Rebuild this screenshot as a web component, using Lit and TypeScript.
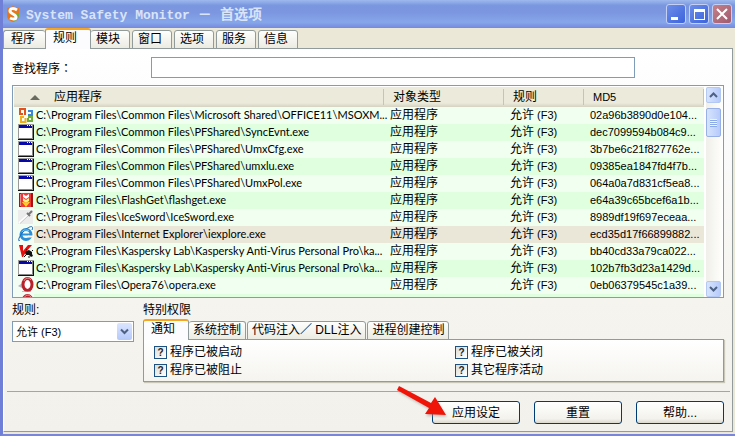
import { LitElement, html, css, svg } from "lit";
import { customElement, property, state } from "lit/decorators.js";
import { classMap } from "lit/directives/class-map.js";

type IconName = "office" | "window" | "flashget" | "sword" | "ie" | "kav" | "opera";

interface Rule {
  icon: IconName;
  path: string;
  md5: string;
}

const RULES: Rule[] = [
  { icon: "office", path: "C:\\Program Files\\Common Files\\Microsoft Shared\\OFFICE11\\MSOXM...", md5: "02a96b3890d0e104..." },
  { icon: "window", path: "C:\\Program Files\\Common Files\\PFShared\\SyncEvnt.exe", md5: "dec7099594b084c9..." },
  { icon: "window", path: "C:\\Program Files\\Common Files\\PFShared\\UmxCfg.exe", md5: "3b7be6c21f827762e..." },
  { icon: "window", path: "C:\\Program Files\\Common Files\\PFShared\\umxlu.exe", md5: "09385ea1847fd4f7b..." },
  { icon: "window", path: "C:\\Program Files\\Common Files\\PFShared\\UmxPol.exe", md5: "064a0a7d831cf5ea8..." },
  { icon: "flashget", path: "C:\\Program Files\\FlashGet\\flashget.exe", md5: "e64a39c65bcef6a1b..." },
  { icon: "sword", path: "C:\\Program Files\\IceSword\\IceSword.exe", md5: "8989df19f697eceaa..." },
  { icon: "ie", path: "C:\\Program Files\\Internet Explorer\\iexplore.exe", md5: "ecd35d17f66899882..." },
  { icon: "kav", path: "C:\\Program Files\\Kaspersky Lab\\Kaspersky Anti-Virus Personal Pro\\ka...", md5: "bb40cd33a79ca022..." },
  { icon: "window", path: "C:\\Program Files\\Kaspersky Lab\\Kaspersky Anti-Virus Personal Pro\\ka...", md5: "102b7fb3d23a1429d..." },
  { icon: "opera", path: "C:\\Program Files\\Opera76\\opera.exe", md5: "0eb06379545c1a39..." },
];

const ICONS = {
  office: svg`
    <g fill="none" stroke-width="2">
      <path d="M5 7H2V2H7V7H6" stroke="#e2521f"/>
      <path d="M10 4H14V8H10" stroke="#3b86d8"/>
      <path d="M6 10H3V15H7.500V11" stroke="#f0b01c"/>
      <path d="M10 10H14V14H10V11" stroke="#6fae38"/>
    </g>`,
  window: svg`
    <path d="M0 0h16v16H0z" fill="#9a9a9a"/>
    <path d="M1 4h13v10H1z" fill="#fff"/>
    <path d="M1 1h13v3H1z" fill="#0808a8"/>
    <path d="M9 1h1v1H9zM11 1h1v1h-1zM13 1h1v1h-1z" fill="#fff"/>
    <path d="M15 1h1v15H0v-1h15z" fill="#111"/>
    <path d="M1 14h13v1H1zM14 1h1v13h-1z" fill="#888"/>`,
  flashget: svg`
    <path d="M1 1h14v14H1z" fill="#a31414"/>
    <path d="M3 1h10v14H3z" fill="#f03838"/>
    <path d="M2 2h1v12H2z" fill="#e88"/>
    <path d="M5 2l3 2 3-2v3L8 7 5 5z" fill="#fff"/>
    <path d="M5 6l3 2 3-2v3l-3 2-3-2z" fill="#fff080"/>
    <path d="M4 10h2l2 1 2-1h2l-4 5z" fill="#ffd020"/>`,
  sword: svg`
    <path d="M0 1h15v14H0z" fill="#ececec"/>
    <path d="M1 14L10 6" stroke="#fff" stroke-width="2"/>
    <path d="M2 14.500L11 6" stroke="#c4c4c4"/>
    <path d="M9 4l3 3M11 5l3-3" stroke="#777" stroke-width="2"/>`,
  ie: svg`
    <circle cx="8" cy="8.500" r="5" fill="none" stroke="#2d8fd8" stroke-width="3"/>
    <path d="M4 8.500h10" stroke="#2d8fd8" stroke-width="2"/>
    <path d="M10 10.500h5" stroke="#fbf3e6" stroke-width="2"/>
    <path d="M2 14C-1 17 1 9 7 4S16 0 14 4" fill="none" stroke="#1b67b4"/>
    <path d="M4 6C5 4 8 3 11 5" fill="none" stroke="#8fd0f6"/>`,
  kav: svg`
    <path d="M1 2h4v6l5-6h4L8 9l-3 5H4z" fill="#e31010"/>
    <path d="M8 8l3-1 3 2v2l1 2-2 1-2-2-3 0-1-2z" fill="#111"/>
    <path d="M9 7l-1-1M14 8l1-1M8 12l-2 2M11 13v2" stroke="#111"/>`,
  opera: svg`
    <path d="M0 9l6-4v7z" fill="#b4b4bc"/>
    <ellipse cx="9.500" cy="7.500" rx="4.500" ry="6" fill="#fff" stroke="#b8202a" stroke-width="3"/>
    <path d="M6 4c1-3 5-4 7-1" fill="none" stroke="#ee9090"/>
    <path d="M4 14.500h9" stroke="#999" opacity=".6"/>`,
};

/** A row of tabs; the selected one rises above its neighbours. */
@customElement("tab-strip")
export class TabStrip extends LitElement {
  @property({ attribute: false }) tabs: string[] = [];
  @property({ type: Number }) selected = 0;
  @property({ type: Boolean, reflect: true }) compact = false;

  static styles = css`
    :host { display: flex; align-items: flex-end; height: 21px; }
    .tab {
      box-sizing: border-box;
      height: 19px;
      margin: 0 2px 0 0;
      padding: 0 9px 0 5px;
      border: 1px solid #919b9c;
      border-radius: 3px 3px 0 0;
      background: linear-gradient(#fefefd, #ecebe2);
      color: #000;
      font: inherit;
      line-height: 17px;
      white-space: nowrap;
    }
    :host([compact]) .tab { margin-right: 1px; padding: 0 4px; }
    .tab.after { border-left-width: 0; }
    .tab.before { margin-right: 0; border-right-width: 0; padding: 0 10px 0 7px; }
    .tab.active,
    :host([compact]) .tab.active {
      height: 21px;
      margin: 0;
      padding: 0 13px 2px 7px;
      border-top: 2px solid #f7a421;
      border-bottom: 0;
      background: #fcfcfe;
    }
  `;

  render() {
    return this.tabs.map(
      (label, i) => html`<button
        role="tab"
        aria-selected=${i === this.selected}
        class=${classMap({
          tab: true,
          active: i === this.selected,
          before: i === this.selected - 1,
          after: i === this.selected + 1,
        })}
        @click=${() => { this.selected = i; }}
      >${label}</button>`
    );
  }
}

@customElement("app-root")
export class AppRoot extends LitElement {
  @state() private current = 7;

  static styles = css`
    :host {
      display: flex;
      flex-direction: column;
      box-sizing: border-box;
      height: 100vh;
      min-height: 400px;
      overflow: hidden;
      border-left: 3px solid #6f7fd8;
      border-bottom: 2px solid #7a86dc;
      background: #ebe8d7;
      color: #000;
      font: 12px/16px "Liberation Sans", "Noto Sans CJK SC", sans-serif;
    }
    .latin { font-size: 11px; }

    .titlebar {
      display: flex;
      align-items: center;
      flex: none;
      height: 28px;
      gap: 3px;
      padding: 0 3px;
      background: linear-gradient(#9db9ee, #7a96df 20%, #7c97e0 45%, #86a6ea 80%, #7688dd);
    }
    .logo { width: 14px; height: 18px; }
    .title {
      flex: 1;
      margin: 0;
      padding: 2px 0 0 3px;
      color: #d9e4f8;
      font: bold 13px/20px "Liberation Mono", "Noto Sans CJK SC", monospace;
      white-space: pre;
    }
    .section { font-size: 14px; }
    .caption {
      box-sizing: border-box;
      width: 20px;
      height: 20px;
      padding: 0;
      border: 1px solid #c3d0f4;
      border-radius: 3px;
      background: linear-gradient(135deg, #6c8ee8, #3c63dc);
    }
    .caption.close { background: linear-gradient(135deg, #c58088, #a05a70); }
    .caption svg { display: block; width: 18px; height: 18px; }

    .page {
      display: flex;
      flex-direction: column;
      flex: 1;
      min-height: 0;
      margin: -1px 2px 2px 0;
      border: 1px solid #919b9c;
      border-left-color: #fff;
      background: linear-gradient(#fff, #fcfcfe 15%, #f5f4ef 65%, #f2f1ec);
    }
    .tabs { position: relative; z-index: 1; flex: none; }

    .search {
      display: flex;
      align-items: center;
      flex: none;
      margin: 8px 97px 7px 8px;
    }
    .search label { width: 139px; font-family: "Noto Sans CJK TC", sans-serif; }
    .search input {
      box-sizing: border-box;
      flex: 1;
      min-width: 0;
      height: 21px;
      border: 1px solid #7f9db9;
      background: #fff;
      font: inherit;
    }

    .list {
      display: flex;
      flex: 1;
      min-height: 0;
      margin: 0 8px;
      padding: 1px 1px 0 1px;
      border: 1px solid #7f9db9;
      background: #fff;
    }
    .view { flex: 1; min-width: 0; overflow: hidden; }
    table { width: 100%; border-collapse: collapse; table-layout: fixed; }
    .type { width: 120px; }
    .rule { width: 80px; }
    .hash { width: 121px; }
    th {
      height: 20px;
      padding: 0;
      background: linear-gradient(#ebeadb, #ebeadb 80%, #d6d2c2);
      font-weight: normal;
      text-align: left;
    }
    .head {
      display: flex;
      align-items: center;
      gap: 14px;
      height: 16px;
      padding-left: 9px;
      border-left: 1px solid #c7c5b2;
    }
    .head.first { padding-left: 16px; border-left: 0; }
    .head.last { border-right: 1px solid #c7c5b2; }
    .sort {
      border: 5px solid transparent;
      border-top: 0;
      border-bottom-color: #6b6a5e;
    }
    td {
      height: 17px;
      padding: 0 0 0 7px;
      background: #f0fff0;
      line-height: 17px;
      white-space: nowrap;
    }
    tr.even td { background: #dfffdf; }
    tr.current td { background: #ebe7d8; }
    tr td.file { padding: 0; background: #f4fdf4; }
    .cell { display: flex; }
    .cell svg { flex: none; width: 16px; height: 16px; margin-left: 4px; }
    .path {
      flex: 1;
      min-width: 0;
      height: 17px;
      padding-left: 2px;
      background: #f0fff0;
      font-family: Lato, sans-serif;
      font-size: 11px;
      line-height: 15px;
      white-space: nowrap;
    }
    .even .path { background: #dfffdf; }
    .current .path { background: #ebe7d8; }
    .md5 { font-size: 11px; }

    .scroll {
      display: flex;
      flex-direction: column;
      width: 16px;
      margin-left: 2px;
      background: linear-gradient(90deg, #f0efea, #fefefb);
    }
    .step, .thumb {
      box-sizing: border-box;
      width: 15px;
      height: 16px;
      padding: 0;
      border: 1px solid #b4c8f4;
      border-radius: 2px;
      background: linear-gradient(90deg, #d8e4fe, #b6cbfb);
    }
    .step svg { display: block; width: 13px; height: 14px; }
    .thumb {
      display: grid;
      place-content: center;
      height: 29px;
      margin: 5px 0 auto;
      border-color: #98b0e8;
    }
    .grip {
      width: 7px;
      height: 8px;
      background: repeating-linear-gradient(#eef4fe 0, #eef4fe 1px, #8caae8 1px, #8caae8 2px);
    }

    .lower {
      display: grid;
      grid-template-columns: 122px 1fr;
      column-gap: 9px;
      flex: none;
      margin: 2px 8px 9px;
    }
    .caption-text { display: block; height: 21px; line-height: 20px; }
    .pick { position: relative; }
    .pick select {
      box-sizing: border-box;
      display: block;
      width: 100%;
      height: 21px;
      padding: 0 3px;
      border: 1px solid #7f9db9;
      border-radius: 0;
      background: #fff;
      color: #000;
      font: inherit;
      font-size: 11px;
      appearance: none;
    }
    .drop {
      position: absolute;
      top: 2px;
      right: 2px;
      width: 15px;
      height: 17px;
      border-radius: 2px;
      background: linear-gradient(#dbe5fe, #b4c9fb);
      pointer-events: none;
    }
    .rights { position: relative; z-index: 1; margin-top: -2px; }
    .checks {
      display: grid;
      grid-template-columns: 301px 1fr;
      row-gap: 2px;
      margin-top: -1px;
      padding: 4px 10px;
      padding-bottom: 3px;
      border: 1px solid #919b9c;
      background: linear-gradient(#fff, #f5f4ef);
      box-shadow: 1px 1px 1px #c9c7ba;
    }
    .checks label { display: flex; align-items: center; gap: 3px; }
    .checks input {
      box-sizing: border-box;
      display: grid;
      place-content: center;
      width: 13px;
      height: 13px;
      margin: 0;
      border: 1px solid #1c5180;
      background: linear-gradient(135deg, #dcdcd7, #fff);
      appearance: none;
    }
    .checks input::before {
      content: "?";
      color: #222;
      font: bold 10px/11px "Liberation Sans", sans-serif;
    }

    .actions {
      display: flex;
      justify-content: flex-end;
      gap: 14px;
      flex: none;
      margin: 0 2px 0 3px;
      padding: 9px 6px 7px;
      border-top: 1px solid #a5a899;
    }
    .holder { position: relative; }
    .action {
      box-sizing: border-box;
      width: 88px;
      height: 23px;
      padding: 0;
      border: 1px solid #003c74;
      border-radius: 3px;
      background: linear-gradient(#fff, #f3f2ec 80%, #dcd8cc);
      color: #000;
      font: inherit;
    }
    .pointer {
      position: absolute;
      left: -38px;
      top: -18px;
      width: 54px;
      height: 38px;
      filter: drop-shadow(1px 2px 1px #99999988);
      pointer-events: none;
    }
  `;

  private renderRule(rule: Rule, i: number) {
    return html`<tr
      class=${classMap({ even: i % 2 === 1, current: i === this.current })}
      @click=${() => { this.current = i; }}
    >
      <td class="file">
        <div class="cell">
          <svg viewBox="0 0 16 16" aria-hidden="true">${ICONS[rule.icon]}</svg>
          <span class="path">${rule.path}</span>
        </div>
      </td>
      <td>应用程序</td>
      <td>允许<span class="latin"> (F3)</span></td>
      <td class="md5">${rule.md5}</td>
    </tr>`;
  }

  render() {
    return html`
      <header class="titlebar">
        <svg class="logo" viewBox="0 0 14 18" aria-hidden="true">
          <path d="M1 3C4 3 5 2 7 1c2 1 3 2 6 2v7c0 4-3 6-6 7-3-1-6-3-6-7z" fill="#e8761c"/>
          <path d="M7 9h6c0 5-3 7-6 8z" fill="#6fae32"/>
          <path d="M11 5C8 3 4 3 4 6s6 3 6 6-4 2-6 1" fill="none" stroke="#fff" stroke-width="3"/>
        </svg>
        <h1 class="title">System Safety Monitor <span class="section">－ 首选项</span></h1>
        <button class="caption" aria-label="最小化">
          <svg viewBox="0 0 18 18"><path d="M4 12h7v3H4z" fill="#fff"/></svg>
        </button>
        <button class="caption" aria-label="最大化">
          <svg viewBox="0 0 18 18"><path d="M4 4h11v11H4zM5 7v7h9V7z" fill="#fff" fill-rule="evenodd"/></svg>
        </button>
        <button class="caption close" aria-label="关闭">
          <svg viewBox="0 0 18 18"><path d="M4 4l10 10M14 4L4 14" stroke="#fff" stroke-width="2"/></svg>
        </button>
      </header>
      <tab-strip class="tabs" role="tablist" .tabs=${["程序", "规则", "模块", "窗口", "选项", "服务", "信息"]} selected="1"></tab-strip>
      <main class="page">
        <div class="search">
          <label for="find">查找程序：</label>
          <input id="find" type="text" />
        </div>
        <div class="list">
          <div class="view">
            <table>
              <colgroup><col /><col class="type" /><col class="rule" /><col class="hash" /></colgroup>
              <thead>
                <tr>
                  <th><div class="head first"><span class="sort"></span>应用程序</div></th>
                  <th><div class="head">对象类型</div></th>
                  <th><div class="head">规则</div></th>
                  <th><div class="head last latin">MD5</div></th>
                </tr>
              </thead>
              <tbody>
                ${RULES.map((rule, i) => this.renderRule(rule, i))}
                <tr class="even">
                  <td class="file">
                    <div class="cell">
                      <svg viewBox="0 0 16 16" aria-hidden="true">${ICONS.opera}</svg>
                      <span class="path"></span>
                    </div>
                  </td>
                  <td></td><td></td><td></td>
                </tr>
              </tbody>
            </table>
          </div>
          <div class="scroll">
            <button class="step" aria-label="向上">
              <svg viewBox="0 0 13 14"><path d="M3 9l3.500-3.500L10 9" fill="none" stroke="#4d6185" stroke-width="2"/></svg>
            </button>
            <div class="thumb"><div class="grip"></div></div>
            <button class="step" aria-label="向下">
              <svg viewBox="0 0 13 14"><path d="M3 5l3.500 3.500L10 5" fill="none" stroke="#4d6185" stroke-width="2"/></svg>
            </button>
          </div>
        </div>
        <div class="lower">
          <div>
            <label class="caption-text" for="mode">规则:</label>
            <div class="pick">
              <select id="mode"><option>允许 (F3)</option></select>
              <svg class="drop" viewBox="0 0 15 17" aria-hidden="true">
                <path d="M4 6.500l3.500 3.500L11 6.500" fill="none" stroke="#4d6185" stroke-width="2"/>
              </svg>
            </div>
          </div>
          <section>
            <span class="caption-text">特别权限</span>
            <tab-strip class="rights" compact role="tablist" .tabs=${["通知", "系统控制", "代码注入／ DLL注入", "进程创建控制"]} selected="0"></tab-strip>
            <div class="checks">
              ${["程序已被启动", "程序已被关闭", "程序已被阻止", "其它程序活动"].map(
                (name) => html`<label><input type="checkbox" .indeterminate=${true} />${name}</label>`
              )}
            </div>
          </section>
        </div>
        <footer class="actions">
          <div class="holder">
            <button class="action">应用设定</button>
            <svg class="pointer" viewBox="0 0 54 38" aria-hidden="true">
              <path d="M5 3L37 20 41 14 52 32 31 31 35 25 3 7z" fill="#f01408"/>
            </svg>
          </div>
          <button class="action">重置</button>
          <button class="action">帮助...</button>
        </footer>
      </main>
    `;
  }
}
